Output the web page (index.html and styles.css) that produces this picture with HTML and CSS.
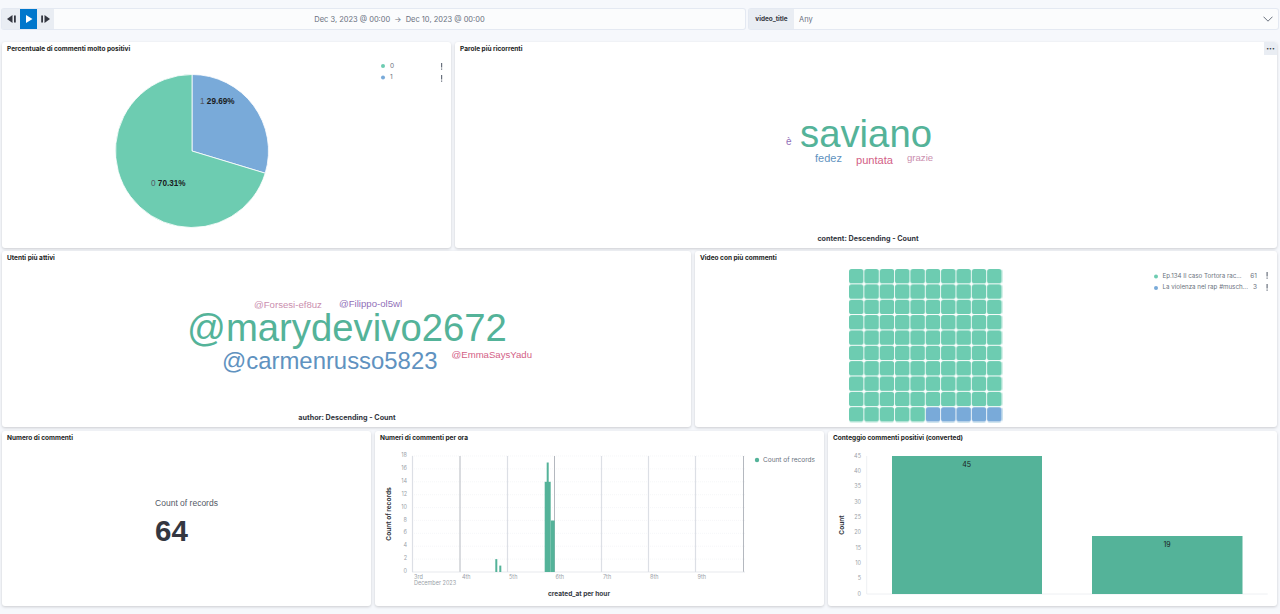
FILE: index.html
```html
<!DOCTYPE html>
<html lang="en">
<head>
  <meta charset="UTF-8">
  <title>Dashboard commenti</title>
  <link rel="stylesheet" href="styles.css">
</head>
<body>
  <header class="controls">
    <div class="time-control">
      <button class="step-btn step-first" type="button">
        <svg width="9" height="8" viewBox="0 0 9 8"><path d="M5.500 0v8L0 4zM7 .5h1.800v7H7z" fill="#343741"/></svg>
      </button>
      <button class="step-btn play-btn" type="button">
        <svg width="8" height="8" viewBox="0 0 8 8"><path d="M1 0l6.500 4L1 8z" fill="#fff"/></svg>
      </button>
      <button class="step-btn" type="button">
        <svg width="9" height="8" viewBox="0 0 9 8"><path d="M3.500 0v8L9 4zM.2 .5H2v7H.2z" fill="#343741"/></svg>
      </button>
      <div class="time-range">Dec 3, 2023 @ 00:00 <span class="arrow">→</span> Dec 10, 2023 @ 00:00</div>
    </div>
    <div class="filter-control">
      <span class="filter-label">video_title</span>
      <span class="filter-value">Any</span>
      <svg class="chevron" width="10" height="6" viewBox="0 0 10 6"><path d="M.5.7L5 5.200 9.500.7" fill="none" stroke="#69707d" stroke-width="1"/></svg>
    </div>
  </header>

  <main class="grid">
    <section class="row row-1">
      <article class="panel panel-pie">
        <h3>Percentuale di commenti molto positivi</h3>
        <svg class="chart" width="449" height="206" viewBox="0 0 449 206">
          <path d="M190 109L190 32.500A76.500 76.500 0 0 1 263.200 131.200Z" fill="#79aad9" stroke="#fff" stroke-width=".8"/>
          <path d="M190 109L263.200 131.200A76.500 76.500 0 1 1 190 32.500Z" fill="#6dccb1" stroke="#fff" stroke-width=".8"/>
          <text class="pie-label" x="198" y="61.500">1 <tspan class="strong">29.69%</tspan></text>
          <text class="pie-label" x="149" y="143.700">0 <tspan class="strong">70.31%</tspan></text>
          <circle cx="381" cy="24" r="2" fill="#6dccb1"/>
          <text class="legend" x="388" y="25.500">0</text>
          <circle cx="381" cy="35.500" r="2" fill="#79aad9"/>
          <text class="legend" x="388" y="37">1</text>
          <path d="M439 21h1.200v4.500h-1.200zM439 26.500h1.200v1.200h-1.200zM439 33h1.200v4.500h-1.200zM439 38.500h1.200v1.200h-1.200z" fill="#69707d"/>
        </svg>
      </article>
      <article class="panel panel-words">
        <h3>Parole più ricorrenti</h3>
        <span class="panel-menu">•••</span>
        <svg class="chart cloud" width="822" height="206" viewBox="0 0 822 206">
          <text x="331" y="103" font-size="10" fill="#9170b8">è</text>
          <text x="345" y="104.700" font-size="38.300" fill="#54b399">saviano</text>
          <text x="360" y="120.300" font-size="11" fill="#6092c0">fedez</text>
          <text x="401" y="122.300" font-size="11.100" fill="#d36086">puntata</text>
          <text x="452" y="118.700" font-size="9.600" fill="#ca8eae">grazie</text>
          <text class="axis-title cloud-title" x="413" y="199" text-anchor="middle">content: Descending - Count</text>
        </svg>
      </article>
    </section>

    <section class="row row-2">
      <article class="panel panel-users">
        <h3>Utenti più attivi</h3>
        <svg class="chart cloud" width="689" height="176" viewBox="0 0 689 176">
          <text x="252" y="57.300" font-size="9.600" fill="#ca8eae">@Forsesi-ef8uz</text>
          <text x="337" y="56.300" font-size="9.600" fill="#9170b8">@Filippo-ol5wl</text>
          <text x="185" y="90" font-size="38.300" fill="#54b399">@marydevivo2672</text>
          <text x="220" y="117.700" font-size="23.900" fill="#6092c0">@carmenrusso5823</text>
          <text x="449.500" y="106.700" font-size="9.600" fill="#d36086">@EmmaSaysYadu</text>
          <text class="axis-title cloud-title" x="345" y="169" text-anchor="middle">author: Descending - Count</text>
        </svg>
      </article>
      <article class="panel panel-waffle">
        <h3>Video con più commenti</h3>
        <svg class="chart" width="582" height="176" viewBox="0 0 582 176">
          <defs>
            <pattern id="cellGreen" x="154" y="18" width="15.350" height="15.350" patternUnits="userSpaceOnUse">
              <rect width="14.500" height="14.500" rx="2.500" fill="#6dccb1"/>
            </pattern>
            <pattern id="cellBlue" x="154" y="18" width="15.350" height="15.350" patternUnits="userSpaceOnUse">
              <rect width="14.500" height="14.500" rx="2.500" fill="#79aad9"/>
            </pattern>
          </defs>
          <rect x="154" y="18" width="153.500" height="153.500" fill="url(#cellGreen)"/>
          <rect x="230.750" y="156.150" width="76.750" height="15.350" fill="#fff"/>
          <rect x="230.750" y="156.150" width="76.750" height="15.350" fill="url(#cellBlue)"/>
          <circle cx="461" cy="25.500" r="2" fill="#6dccb1"/>
          <text class="legend legend-sm" x="467.500" y="26.500">Ep.134 Il caso Tortora rac...</text>
          <text class="legend" x="562" y="26.500" text-anchor="end">61</text>
          <circle cx="461" cy="37" r="2" fill="#79aad9"/>
          <text class="legend legend-sm" x="467.500" y="38">La violenza nel rap #musch...</text>
          <text class="legend" x="562" y="38" text-anchor="end">3</text>
          <path d="M571.500 21h1.200v4.500h-1.200zM571.500 26.500h1.200v1.200h-1.200zM571.500 33h1.200v4.500h-1.200zM571.500 38.500h1.200v1.200h-1.200z" fill="#69707d"/>
        </svg>
      </article>
    </section>

    <section class="row row-3">
      <article class="panel panel-metric">
        <h3>Numero di commenti</h3>
        <div class="metric">
          <span class="metric-label">Count of records</span>
          <span class="metric-value">64</span>
        </div>
      </article>
      <article class="panel panel-hist">
        <h3>Numeri di commenti per ora</h3>
        <svg class="chart" width="449" height="175" viewBox="0 0 449 175">
          <g stroke="#eef0f3" stroke-width=".6" stroke-dasharray="1 1">
            <path d="M37 25h333M37 37.900h333M37 50.800h333M37 63.700h333M37 76.600h333M37 89.400h333M37 102.300h333M37 115.200h333M37 128.100h333"/>
          </g>
          <g stroke="#dcdfe5" stroke-width="1.200">
            <path d="M37.500 25v116M132.500 25v116M226.500 25v116M273.500 25v116M320.500 25v116"/>
          </g>
          <g stroke="#b4b8bf" stroke-width="1">
            <path d="M85 25v116M179.500 25v116M368.500 25v116"/>
          </g>
          <path d="M37 141h333" stroke="#dcdfe5" stroke-width=".7"/>
          <g fill="#54b399">
            <rect x="120.300" y="128.100" width="2" height="12.900"/>
            <rect x="124.300" y="134.600" width="2" height="6.400"/>
            <rect x="169.700" y="50.800" width="6" height="90.200"/>
            <rect x="171.700" y="31.500" width="2" height="109.500"/>
            <rect x="175.700" y="89.500" width="4" height="51.500"/>
          </g>
          <g class="tick" text-anchor="end">
            <text x="32" y="26.300">18</text><text x="32" y="39.200">16</text><text x="32" y="52">14</text>
            <text x="32" y="64.900">12</text><text x="32" y="77.700">10</text><text x="32" y="90.600">8</text>
            <text x="32" y="103.400">6</text><text x="32" y="116.300">4</text><text x="32" y="129.100">2</text><text x="32" y="142">0</text>
          </g>
          <g class="tick">
            <text x="39" y="147.500">3rd</text><text x="39" y="153.500">December 2023</text>
            <text x="87" y="147.500">4th</text><text x="134" y="147.500">5th</text><text x="180.500" y="147.500">6th</text>
            <text x="228" y="147.500">7th</text><text x="275" y="147.500">8th</text><text x="322.500" y="147.500">9th</text>
          </g>
          <text class="axis-title" transform="translate(15.700 83) rotate(-90)" text-anchor="middle">Count of records</text>
          <text class="axis-title" x="204" y="164.500" text-anchor="middle">created_at per hour</text>
          <circle cx="382" cy="29" r="2.200" fill="#54b399"/>
          <text class="legend" x="388" y="31">Count of records</text>
        </svg>
      </article>
      <article class="panel panel-bars">
        <h3>Conteggio commenti positivi (converted)</h3>
        <svg class="chart" width="449" height="175" viewBox="0 0 449 175">
          <path d="M38.700 25v138M38.700 163h401" stroke="#eef0f3" stroke-width="1" fill="none"/>
          <rect x="64" y="25" width="150" height="138" fill="#54b399"/>
          <rect x="264" y="105" width="150.500" height="58" fill="#54b399"/>
          <text class="bar-label" x="138.700" y="35.500" text-anchor="middle">45</text>
          <text class="bar-label" x="339" y="115.500" text-anchor="middle">19</text>
          <g class="tick" text-anchor="end">
            <text x="33" y="26.700">45</text><text x="33" y="42">40</text><text x="33" y="57.400">35</text>
            <text x="33" y="72.700">30</text><text x="33" y="88">25</text><text x="33" y="103.400">20</text>
            <text x="33" y="118.700">15</text><text x="33" y="134">10</text><text x="33" y="149.400">5</text><text x="33" y="164.700">0</text>
          </g>
          <text class="axis-title" transform="translate(16 94) rotate(-90)" text-anchor="middle">Count</text>
        </svg>
      </article>
    </section>
  </main>
</body>
</html>
```

FILE: styles.css
```css
* {
  box-sizing: border-box;
}

html,
body {
  height: 100%;
}

body {
  margin: 0;
  background-color: #f6f8fc;
  font-family: Inter, "Liberation Sans", sans-serif;
  color: #343741;
  overflow: hidden;
}

.controls {
  display: flex;
  gap: 4px;
  height: 42px;
  padding: 9px 2px 0;
}

.time-control,
.filter-control {
  display: flex;
  align-items: center;
  height: 20px;
  background-color: #fbfcfd;
  box-shadow: 0 0 0 1px #e4e9f2;
  border-radius: 2px;
  font-size: 7.5px;
  color: #69707d;
}

.time-control {
  width: 743px;
}

.filter-control {
  flex: 1;
}

.step-btn {
  width: 17px;
  height: 20px;
  padding: 0;
  border: none;
  background-color: #e9edf3;
  display: flex;
  align-items: center;
  justify-content: center;
}

.step-first {
  width: 18px;
}

.play-btn {
  background-color: #0077cc;
}

.time-range {
  flex: 1;
  text-align: center;
  white-space: pre;
}

.arrow {
  margin: 0 2px;
}

.filter-label {
  width: 45px;
  height: 20px;
  line-height: 20px;
  text-align: center;
  font-size: 6.4px;
  font-weight: 700;
  color: #343741;
  background-color: #e9edf3;
}

.filter-value {
  flex: 1;
  padding-left: 5px;
}

.chevron {
  margin-right: 5px;
}

.grid {
  display: flex;
  flex-direction: column;
  gap: 3px;
  padding: 0 3px 0 2px;
}

.row {
  display: flex;
  gap: 4px;
}

.row-1 {
  height: 206px;
}

.row-2 {
  height: 176px;
  margin-bottom: 1px;
}

.row-3 {
  height: 175px;
}

.panel {
  position: relative;
  background-color: #fff;
  border-radius: 3px;
  box-shadow: 0 1px 3px rgba(0, 0, 0, 0.18);
  overflow: hidden;
}

.panel h3 {
  position: absolute;
  top: 3px;
  left: 5px;
  margin: 0;
  font-size: 6.5px;
  line-height: 8px;
  font-weight: 700;
  color: #1a1c21;
  white-space: nowrap;
}

.panel-menu {
  position: absolute;
  top: 0;
  right: 0;
  width: 13px;
  height: 13px;
  background-color: #e9edf3;
  font-size: 5px;
  line-height: 13px;
  text-align: center;
  color: #343741;
}

.panel-pie {
  width: 449px;
}

.panel-words {
  width: 822px;
}

.panel-users {
  width: 689px;
}

.panel-waffle {
  width: 582px;
}

.panel-metric {
  width: 369px;
  display: flex;
  align-items: center;
  justify-content: center;
}

.panel-hist {
  width: 449px;
}

.panel-bars {
  width: 449px;
}

.chart {
  display: block;
}

.chart text {
  font-family: Inter, "Liberation Sans", sans-serif;
}

.chart.cloud text {
  font-family: "Liberation Sans", Arial, sans-serif;
}

.chart .pie-label {
  font-family: "Liberation Sans", Arial, sans-serif;
  font-size: 8.2px;
  fill: #535966;
}

.strong {
  font-weight: 700;
  fill: #1a1c21;
}

.legend {
  font-size: 6.5px;
  fill: #69707d;
}

.legend-sm {
  font-size: 6.2px;
}

.tick {
  font-size: 5.5px;
  fill: #9a9fa8;
}

.axis-title {
  font-size: 6.5px;
  font-weight: 700;
  fill: #343741;
}

.chart.cloud .cloud-title {
  font-family: Inter, "Liberation Sans", sans-serif;
  font-size: 7.2px;
}

.bar-label {
  font-size: 7px;
  fill: #1a1c21;
}

.metric {
  display: flex;
  flex-direction: column;
  align-items: flex-start;
  gap: 7px;
  margin-top: 7px;
  font-family: "Liberation Sans", Arial, sans-serif;
}

.metric-label {
  font-size: 8.5px;
  line-height: 10px;
  color: #535966;
}

.metric-value {
  font-size: 29.5px;
  line-height: 32px;
  font-weight: 700;
  color: #343741;
}
```
